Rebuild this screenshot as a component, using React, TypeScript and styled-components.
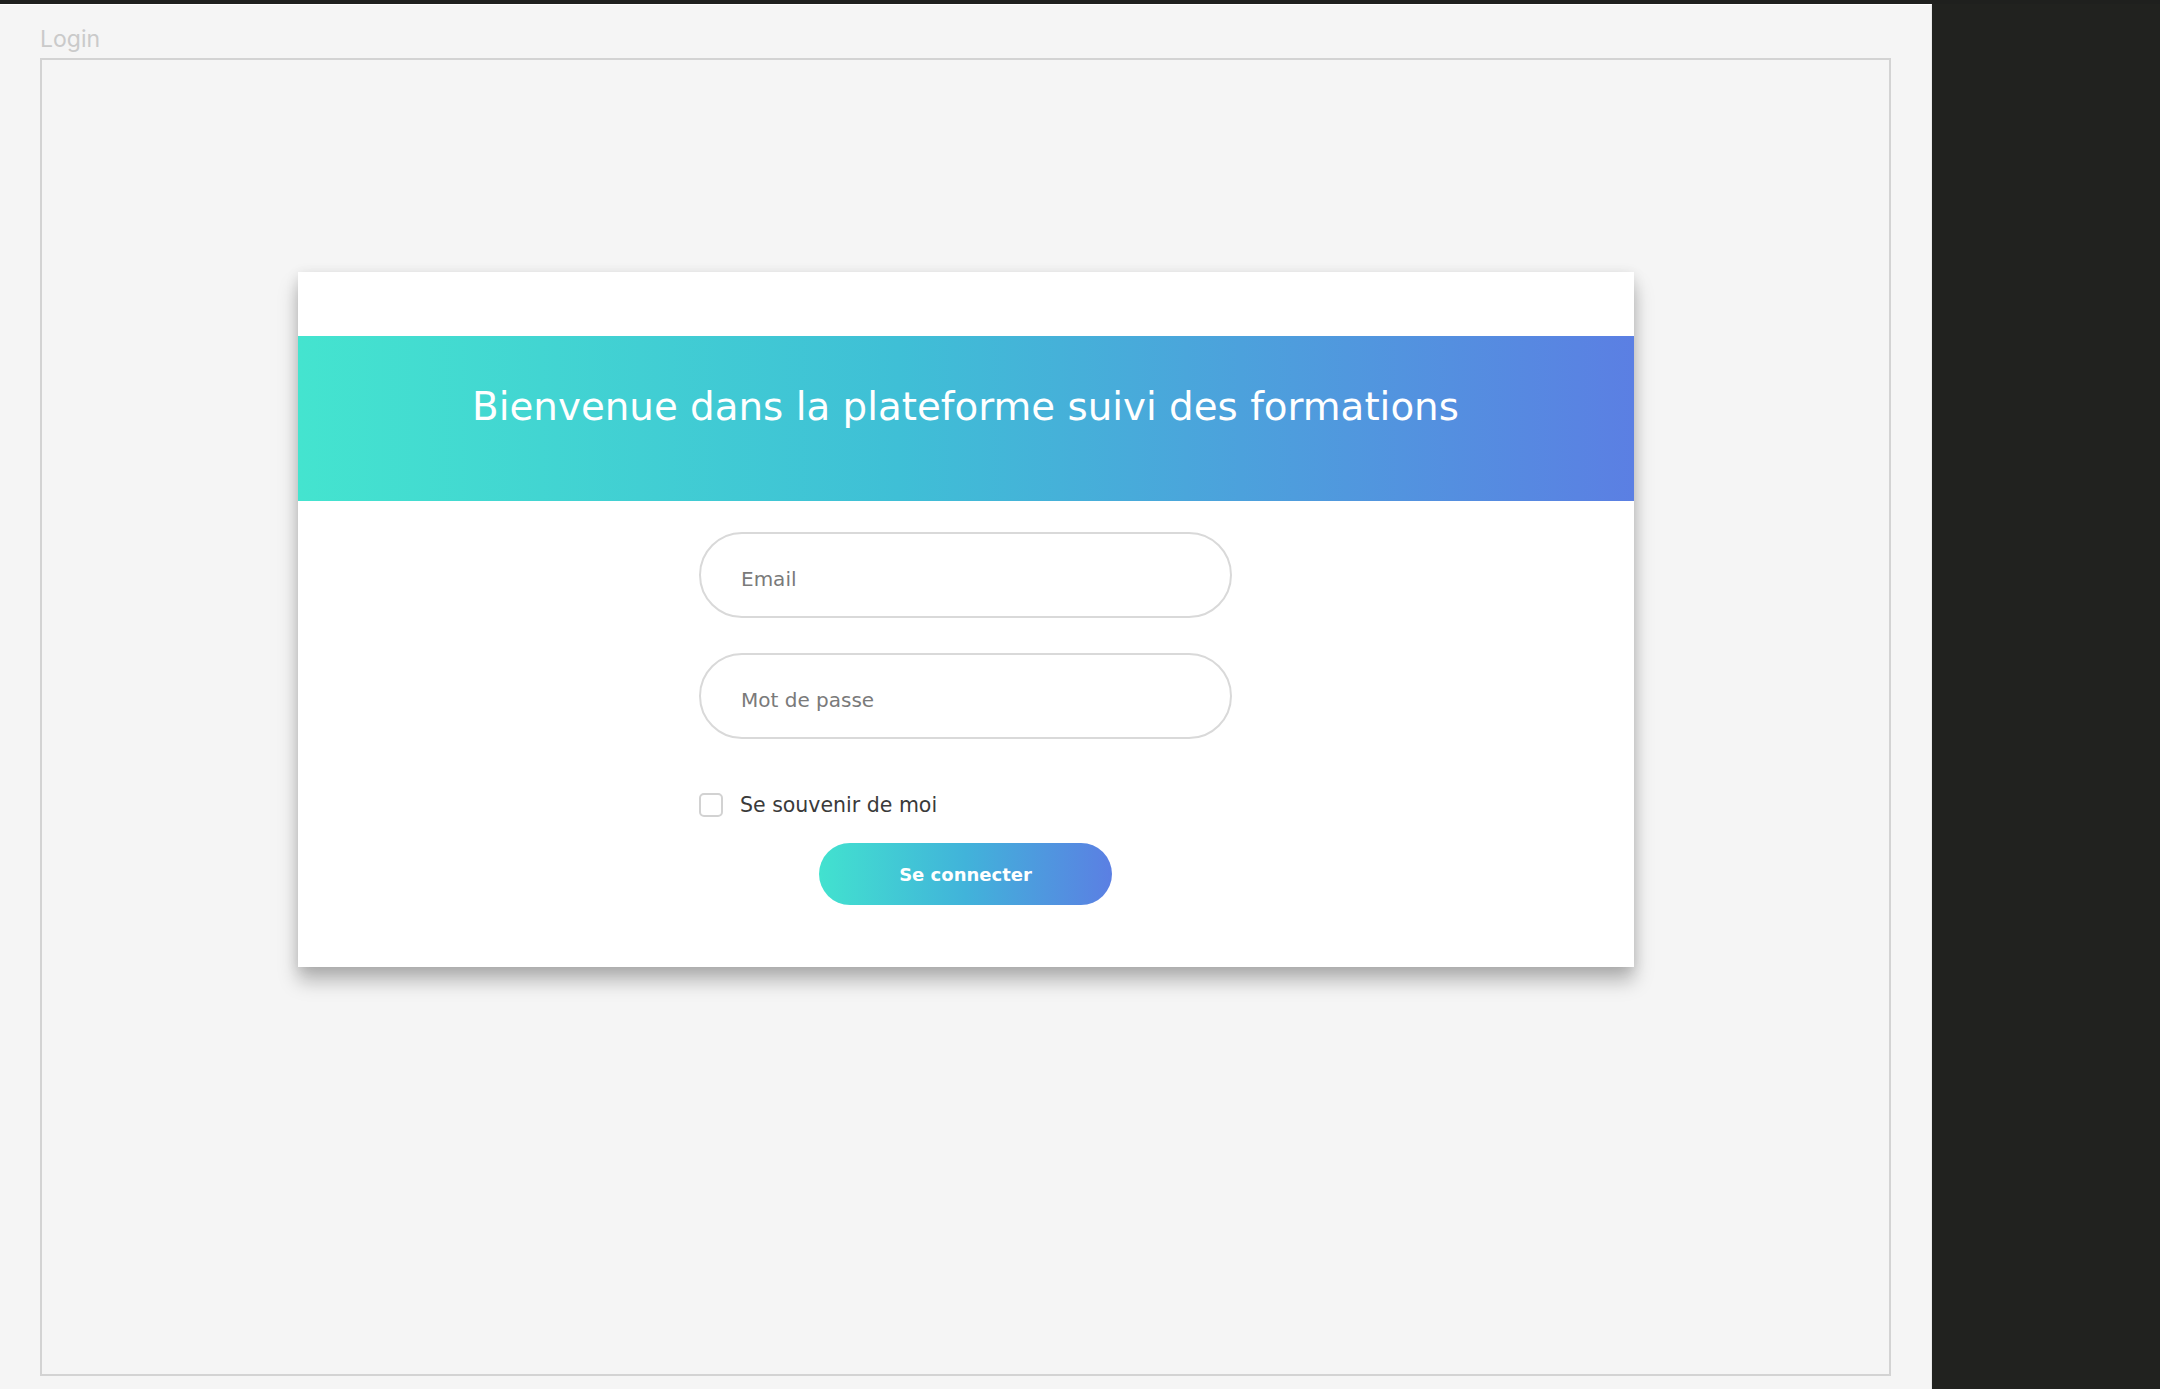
import React from "react";
import styled, { createGlobalStyle } from "styled-components";

const GlobalStyle = createGlobalStyle`
  html, body {
    margin: 0;
    padding: 0;
    background: #21221f;
  }
  * { box-sizing: border-box; }
`;

const Shell = styled.div`
  display: flex;
  width: 2160px;
  height: 1389px;
  background: #21221f;
  border-top: 4px solid #1f201e;
`;

const Canvas = styled.main`
  width: 1932px;
  height: 100%;
  background: #f5f5f5;
  border-top: 1px solid #ffffff;
  border-right: 1px solid #e8e8e8;
  padding: 21px 0 0 40px;
  display: flex;
  flex-direction: column;
`;

const FrameLabel = styled.div`
  font-family: Inter, "Liberation Sans", sans-serif;
  font-size: 23px;
  line-height: 27px;
  color: #cacaca;
  margin-bottom: 5px;
`;

const Frame = styled.section`
  width: 1851px;
  height: 1318px;
  border: 2px solid #d3d3d3;
  display: flex;
  justify-content: center;
  align-items: flex-start;
  padding-top: 212px;
`;

const Card = styled.div`
  width: 1336px;
  background: #ffffff;
  padding: 64px 0 62px;
  box-shadow: 0 14px 18px rgba(0, 0, 0, 0.26), 0 2px 12px rgba(0, 0, 0, 0.1);
  display: flex;
  flex-direction: column;
  font-family: "DejaVu Sans", "Open Sans", sans-serif;
`;

const Banner = styled.header`
  height: 165px;
  padding-top: 46px;
  background: linear-gradient(to right, #44e4cf 0%, #3fbfd6 45%, #5b7fe3 100%);
  text-align: center;
`;

const Title = styled.h1`
  margin: 0;
  font-family: "DejaVu Sans", "Open Sans", sans-serif;
  font-weight: 400;
  font-size: 38.8px;
  line-height: 50px;
  color: #ffffff;
`;

const Form = styled.form`
  width: 533px;
  margin: 31px auto 0;
  display: flex;
  flex-direction: column;
`;

const Field = styled.input<{ $gap?: number }>`
  width: 533px;
  height: 86px;
  border: 2px solid #d9d9d9;
  border-radius: 43px;
  padding: 8px 0 0 40px;
  margin-bottom: ${(p) => p.$gap ?? 0}px;
  font-family: "DejaVu Sans", "Open Sans", sans-serif;
  font-size: 20px;
  color: #555;
  background: #fff;
  outline: none;
  &::placeholder {
    color: #7a7a7a;
  }
`;

const RememberRow = styled.label`
  display: flex;
  align-items: center;
  gap: 17px;
  height: 24px;
  margin-top: 1px;
  font-size: 20.5px;
  font-weight: 400;
  color: #3a3a3a;
  margin-bottom: 26px;
`;

const Box = styled.input`
  appearance: none;
  width: 24px;
  height: 24px;
  margin: 0;
  border: 2px solid #d2d2d2;
  border-radius: 5px;
  background: #fff;
`;

const Submit = styled.button`
  align-self: center;
  width: 293px;
  height: 62px;
  border: none;
  border-radius: 31px;
  background: linear-gradient(to right, #42e2cf 0%, #41b3da 50%, #5b7fe3 100%);
  color: #ffffff;
  font-family: "DejaVu Sans", "Open Sans", sans-serif;
  font-weight: 700;
  font-size: 18px;
  cursor: pointer;
`;

const DarkPanel = styled.aside`
  flex: 1;
  background: #21221f;
`;

export default function App() {
  return (
    <>
      <GlobalStyle />
      <Shell>
        <Canvas>
          <FrameLabel>Login</FrameLabel>
          <Frame>
            <Card>
              <Banner>
                <Title>Bienvenue dans la plateforme suivi des formations</Title>
              </Banner>
              <Form onSubmit={(e) => e.preventDefault()}>
                <Field type="email" placeholder="Email" $gap={35} />
                <Field type="password" placeholder="Mot de passe" $gap={53} />
                <RememberRow>
                  <Box type="checkbox" />
                  Se souvenir de moi
                </RememberRow>
                <Submit type="submit">Se connecter</Submit>
              </Form>
            </Card>
          </Frame>
        </Canvas>
        <DarkPanel />
      </Shell>
    </>
  );
}
